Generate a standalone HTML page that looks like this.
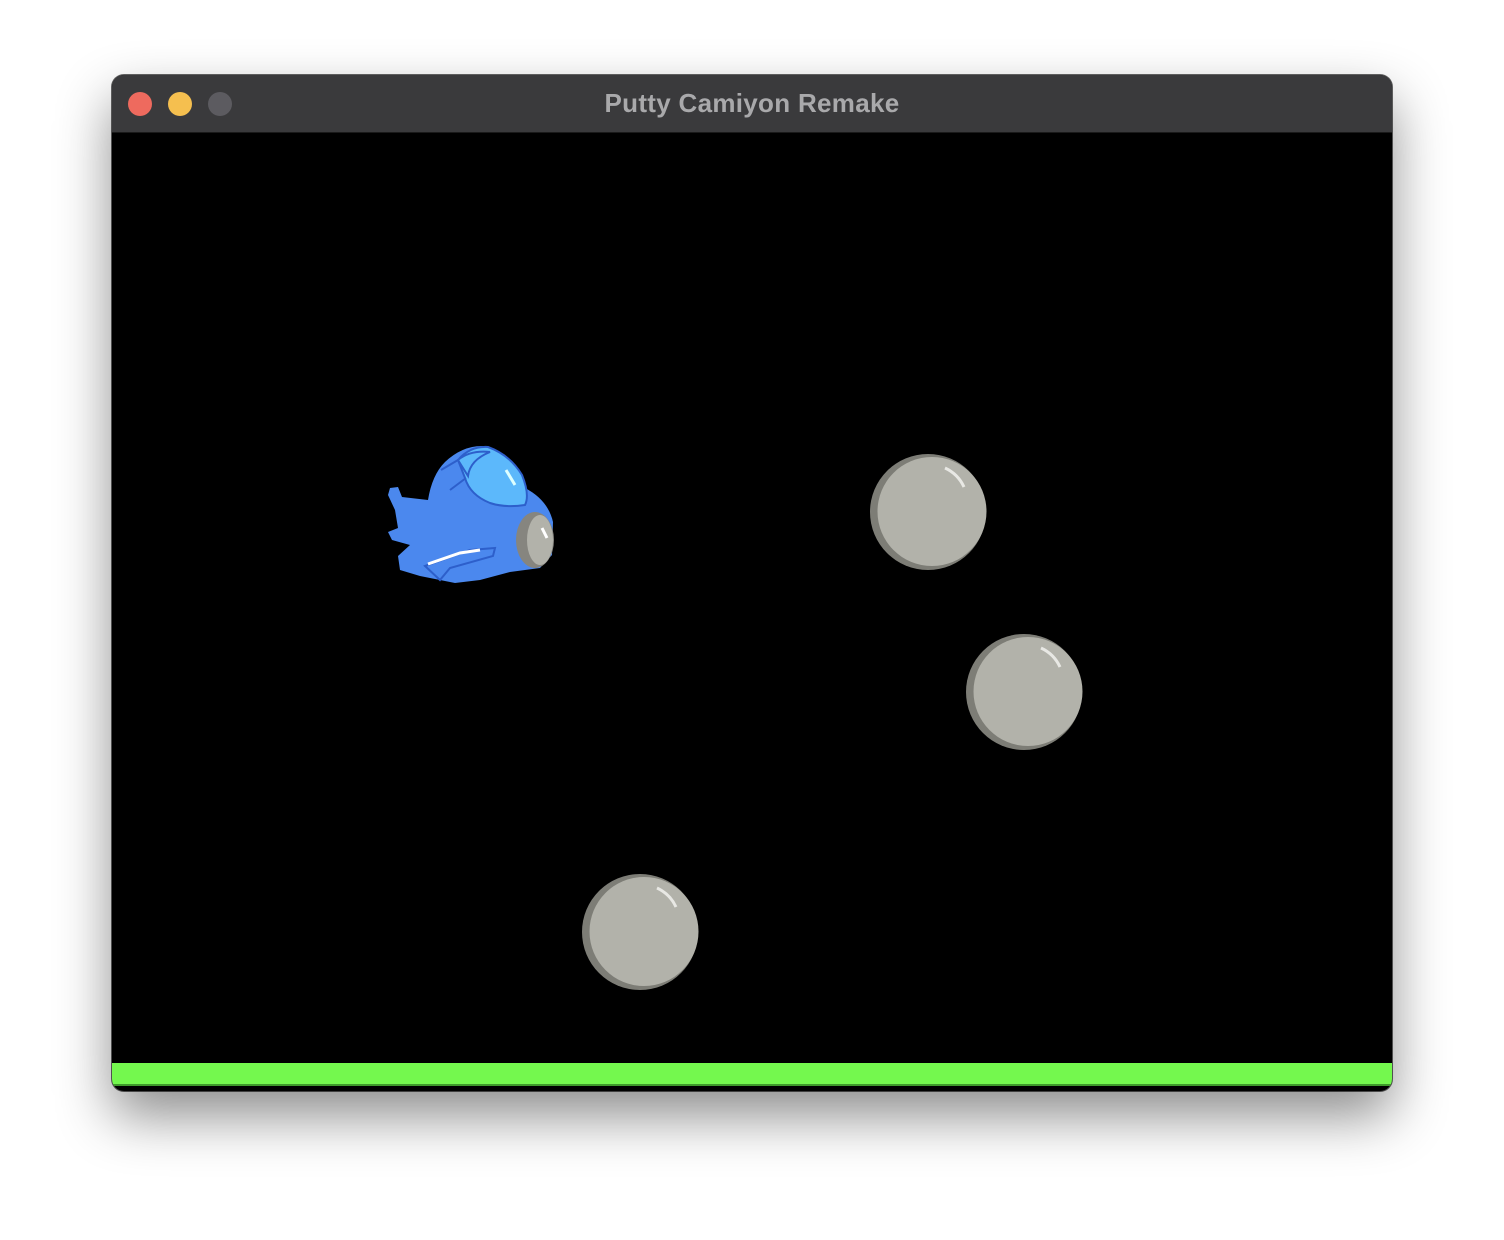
<!DOCTYPE html>
<html><head><meta charset="utf-8"><style>
html,body{margin:0;width:1504px;height:1240px;background:#fff;overflow:hidden}
.win{position:absolute;left:112px;top:75px;width:1280px;height:1016px;border-radius:12px;background:#000;overflow:hidden;box-shadow:0 25px 55px rgba(0,0,0,.45),0 0 0 1px rgba(0,0,0,.6)}
.tb{position:absolute;left:0;top:0;width:1280px;height:57px;background:#3a3a3c;border-bottom:1px solid #1a1a1a}
.tb .t{position:absolute;left:0;right:0;top:13px;text-align:center;color:#a9a9ab;font:bold 26px "Liberation Sans",sans-serif;letter-spacing:0.3px}
.d{position:absolute;top:17px;width:24px;height:24px;border-radius:50%}
.g{position:absolute;left:0;top:988px;width:1280px;height:21px;background:#74f84e;border-bottom:2px solid #3e9a2a}
svg{position:absolute;left:0;top:0}
</style></head><body>
<div class="win">
<div class="tb"><div class="d" style="left:16px;background:#ee6a5e"></div><div class="d" style="left:56px;background:#f5bf4f"></div><div class="d" style="left:96px;background:#5c5b60"></div><div class="t">Putty Camiyon Remake</div></div>
<svg width="1280" height="1016" viewBox="112 75 1280 1016">
<defs><g id="ball">
<circle cx="0" cy="0" r="58" fill="#7d7d76"/>
<circle cx="4" cy="-0.5" r="54.5" fill="#b2b2aa"/>
<path d="M17 -44 Q30 -38 36 -25" stroke="#e8e8e4" stroke-width="3" fill="none"/>
</g></defs>
<use href="#ball" x="928" y="512"/>
<use href="#ball" x="1024" y="692"/>
<use href="#ball" x="640" y="932"/>
<g>
<path d="M390 488 L398 487 L402 497 L428 500 Q432 475 445 462 Q462 446 482 446 Q505 450 518 475 L525 488 Q548 500 553 522 L552 555 L540 568 L510 572 L480 580 L455 583 L420 576 L400 570 L398 556 L410 545 L392 540 L388 532 L398 528 L395 510 L388 495 Z" fill="#4b88ee"/>
<path d="M458 460 Q470 446 488 447 Q510 455 522 475 Q530 495 525 505 Q505 508 490 503 Q470 495 465 478 Z" fill="#5cb8fb" stroke="#2d5fcb" stroke-width="2"/>
<path d="M458 460 Q470 450 490 452 Q470 460 468 476 Z" fill="#5cb8fb" stroke="#2d5fcb" stroke-width="2"/>
<path d="M441 470 L458 460 M450 490 L466 478" stroke="#2d5fcb" stroke-width="2"/>
<path d="M506 470 L515 485" stroke="#dff" stroke-width="3"/>
<path d="M425 566 L470 550 L495 548 L493 556 L450 568 L440 580 Z" fill="#4b88ee" stroke="#2d5fcb" stroke-width="2"/>
<path d="M428 564 L460 553 L480 550" stroke="#fff" stroke-width="3" fill="none"/>
<ellipse cx="535" cy="540" rx="19" ry="28" fill="#86857f"/>
<ellipse cx="540" cy="540" rx="13" ry="25" fill="#b2b2aa"/>
<path d="M542 528 L547 538" stroke="#fff" stroke-width="3"/>
</g>
</svg>
<div class="g"></div>
</div>
</body></html>
